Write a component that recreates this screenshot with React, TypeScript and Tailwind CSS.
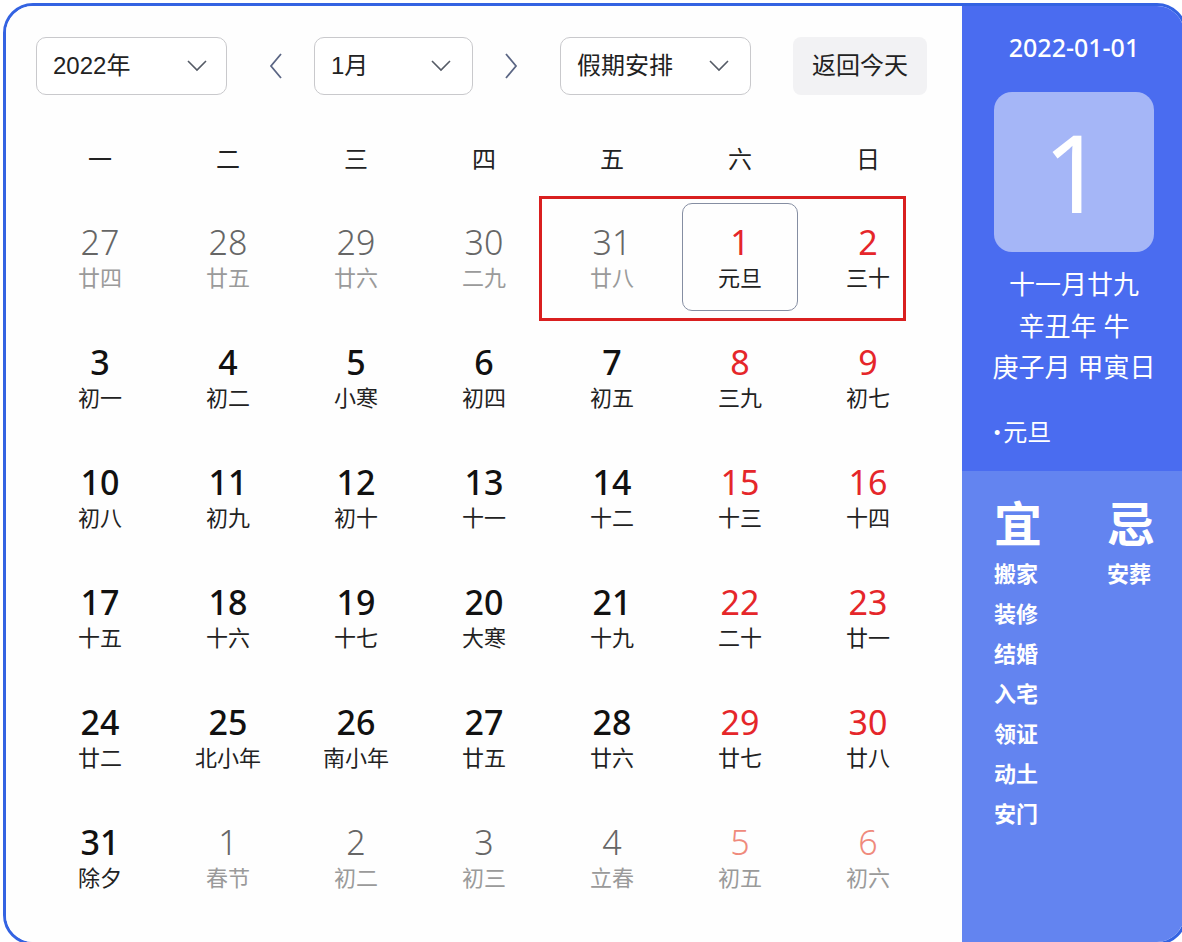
import React from 'react'

type Day = { d: number; l: string; other?: boolean; red?: boolean }

const weeks: Day[][] = [
  [
    { d: 27, l: '廿四', other: true },
    { d: 28, l: '廿五', other: true },
    { d: 29, l: '廿六', other: true },
    { d: 30, l: '二九', other: true },
    { d: 31, l: '廿八', other: true },
    { d: 1, l: '元旦', red: true },
    { d: 2, l: '三十', red: true },
  ],
  [
    { d: 3, l: '初一' },
    { d: 4, l: '初二' },
    { d: 5, l: '小寒' },
    { d: 6, l: '初四' },
    { d: 7, l: '初五' },
    { d: 8, l: '三九', red: true },
    { d: 9, l: '初七', red: true },
  ],
  [
    { d: 10, l: '初八' },
    { d: 11, l: '初九' },
    { d: 12, l: '初十' },
    { d: 13, l: '十一' },
    { d: 14, l: '十二' },
    { d: 15, l: '十三', red: true },
    { d: 16, l: '十四', red: true },
  ],
  [
    { d: 17, l: '十五' },
    { d: 18, l: '十六' },
    { d: 19, l: '十七' },
    { d: 20, l: '大寒' },
    { d: 21, l: '十九' },
    { d: 22, l: '二十', red: true },
    { d: 23, l: '廿一', red: true },
  ],
  [
    { d: 24, l: '廿二' },
    { d: 25, l: '北小年' },
    { d: 26, l: '南小年' },
    { d: 27, l: '廿五' },
    { d: 28, l: '廿六' },
    { d: 29, l: '廿七', red: true },
    { d: 30, l: '廿八', red: true },
  ],
  [
    { d: 31, l: '除夕' },
    { d: 1, l: '春节', other: true },
    { d: 2, l: '初二', other: true },
    { d: 3, l: '初三', other: true },
    { d: 4, l: '立春', other: true },
    { d: 5, l: '初五', other: true, red: true },
    { d: 6, l: '初六', other: true, red: true },
  ],
]

const weekdays = ['一', '二', '三', '四', '五', '六', '日']
const yi = ['搬家', '装修', '结婚', '入宅', '领证', '动土', '安门']

const numFont = { fontFamily: '"Noto Sans", "Liberation Sans", sans-serif' }

function ChevronDown() {
  return (
    <svg width="24" height="14" viewBox="0 0 24 14" fill="none">
      <polyline points="3,2 12,11 21,2" stroke="#555b66" strokeWidth="1.6" />
    </svg>
  )
}

function Arrow({ dir }: { dir: 'left' | 'right' }) {
  return (
    <svg width="14" height="28" viewBox="0 0 14 28" fill="none">
      {dir === 'left' ? (
        <polyline points="12,2 2,14 12,26" stroke="#5b6684" strokeWidth="1.8" />
      ) : (
        <polyline points="2,2 12,14 2,26" stroke="#5b6684" strokeWidth="1.8" />
      )}
    </svg>
  )
}

function Select({ label, width, chevronPr }: { label: string; width: string; chevronPr: string }) {
  return (
    <div
      className={`flex h-[58px] items-center justify-between rounded-[10px] border border-[#c9c9cc] bg-white pl-[16px] ${width} ${chevronPr}`}
    >
      <span className="text-[24px] text-[#222]">{label}</span>
      <ChevronDown />
    </div>
  )
}

function Cell({ day, selected }: { day: Day; selected?: boolean }) {
  let numColor = 'text-[#111] font-medium'
  if (day.other) numColor = day.red ? 'text-[#ef8a7c] font-light' : 'text-[#666] font-light'
  else if (day.red) numColor = 'text-[#e5262a]'
  const lunarColor = day.other ? 'text-[#9a9a9a]' : 'text-[#222]'
  return (
    <div className="flex h-[120px] items-center justify-center p-[6px]">
      <div
        className={`flex h-full w-full flex-col items-center justify-center rounded-[10px] pt-[5px] ${
          selected ? 'border-[1.5px] border-[#858ea2]' : ''
        }`}
      >
        <div className={`text-[34px] leading-[38px] ${numColor}`} style={numFont}>
          {day.d}
        </div>
        <div className={`text-[22px] leading-[36px] ${lunarColor}`}>{day.l}</div>
      </div>
    </div>
  )
}

export default function App() {
  return (
    <div
      className="min-h-[942px] w-[1182px] overflow-hidden bg-white pl-[3px] pt-[3px]"
      style={{ fontFamily: '"Liberation Sans", "Noto Sans CJK SC", sans-serif' }}
    >
      <div className="flex h-[942px] w-[1184px] overflow-hidden rounded-[30px] border-[3px] border-[#3463e2]">
        {/* left: month grid */}
        <div className="w-[956px] bg-[#fefefe] pl-[30px] pt-[31px]">
          <div className="flex items-center">
            <Select label="2022年" width="w-[191px]" chevronPr="pr-[17px]" />
            <div className="ml-[42px] mr-[31px] flex items-center">
              <Arrow dir="left" />
            </div>
            <Select label="1月" width="w-[159px]" chevronPr="pr-[19px]" />
            <div className="ml-[31px] mr-[42px] flex items-center">
              <Arrow dir="right" />
            </div>
            <Select label="假期安排" width="w-[191px]" chevronPr="pr-[19px]" />
            <div className="ml-[42px] flex h-[58px] w-[134px] items-center justify-center rounded-[8px] bg-[#f2f2f4] text-[24px] text-[#222]">
              返回今天
            </div>
          </div>

          <div className="mt-[28px] grid h-[74px] w-[896px] grid-cols-7 items-center">
            {weekdays.map((w) => (
              <div key={w} className="text-center text-[24px] text-[#222]">
                {w}
              </div>
            ))}
          </div>

          <div className="relative w-[896px]">
            {weeks.map((week, wi) => (
              <div key={wi} className="grid grid-cols-7">
                {week.map((day, di) => (
                  <Cell key={di} day={day} selected={wi === 0 && di === 5} />
                ))}
              </div>
            ))}
            <div className="pointer-events-none absolute left-[503px] top-[-1px] h-[125px] w-[367px] border-[3px] border-[#d91f1f]" />
          </div>
        </div>

        {/* right: day detail */}
        <div className="flex flex-1 flex-col text-white">
          <div className="h-[465px] bg-[#4a6cf0] pl-[32px] pt-[26px]">
            <div className="flex w-[160px] flex-col items-center">
              <div className="whitespace-nowrap text-[25px] font-medium leading-[30px]" style={numFont}>
                2022-01-01
              </div>
              <div
                className="mt-[30px] flex h-[160px] w-[160px] items-center justify-center rounded-[18px] bg-[#a5b6f7] text-[108px] leading-none"
                style={numFont}
              >
                1
              </div>
              <div className="mt-[13px] flex flex-col items-center whitespace-nowrap text-[26px] leading-[41.5px]">
                <div>十一月廿九</div>
                <div>辛丑年 牛</div>
                <div>庚子月 甲寅日</div>
              </div>
            </div>
            <div className="mt-[22px] flex items-center whitespace-nowrap text-[24px] leading-[42px]">
              <span className="mr-[3px] text-[18px]">•</span>元旦
            </div>
          </div>
          <div className="flex flex-1 bg-[#6384f0] pl-[32px] pt-[31px]">
            <div className="w-[113px]">
              <div className="text-[48px] font-bold leading-[48px]">宜</div>
              <div className="mt-[5px] text-[22px] font-bold leading-[40px]">
                {yi.map((t) => (
                  <div key={t}>{t}</div>
                ))}
              </div>
            </div>
            <div>
              <div className="text-[48px] font-bold leading-[48px]">忌</div>
              <div className="mt-[5px] text-[22px] font-bold leading-[40px]">安葬</div>
            </div>
          </div>
        </div>
      </div>
    </div>
  )
}
